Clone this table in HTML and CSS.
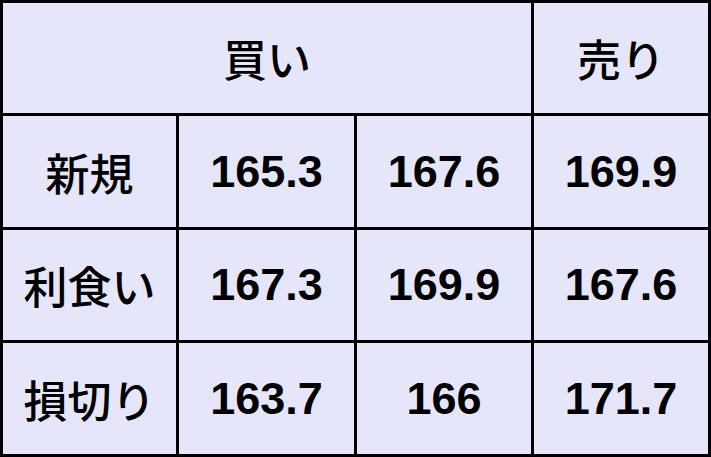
FILE: index.html
```html
<!DOCTYPE html>
<html lang="ja">
<head>
<meta charset="utf-8">
<link rel="stylesheet" href="styles.css">
</head>
<body>
<div class="grid">
  <div class="cell head span3">買い</div>
  <div class="cell head">売り</div>

  <div class="cell label">新規</div>
  <div class="cell num">165.3</div>
  <div class="cell num">167.6</div>
  <div class="cell num">169.9</div>

  <div class="cell label">利食い</div>
  <div class="cell num">167.3</div>
  <div class="cell num">169.9</div>
  <div class="cell num">167.6</div>

  <div class="cell label">損切り</div>
  <div class="cell num">163.7</div>
  <div class="cell num">166</div>
  <div class="cell num">171.7</div>
</div>
</body>
</html>
```
FILE: styles.css
```css
html, body {
  margin: 0;
  padding: 0;
  background: #e6e6fa;
}
.grid {
  display: grid;
  grid-template-columns: 173px 175px 174px 174px;
  grid-template-rows: 110px 111px 110px 111px;
  gap: 3px;
  padding: 3px;
  background: #000;
  width: 711px;
  height: 457px;
  box-sizing: border-box;
}
.cell {
  background: #e6e6fa;
  display: flex;
  align-items: center;
  justify-content: center;
  color: #000;
}
.span3 {
  grid-column: span 3;
}
.head, .label {
  font-family: "Noto Sans CJK JP", sans-serif;
  font-size: 44px;
  font-weight: 500;
}
.num {
  font-family: "Liberation Sans", Arial, sans-serif;
  font-size: 45px;
  font-weight: bold;
}
```
